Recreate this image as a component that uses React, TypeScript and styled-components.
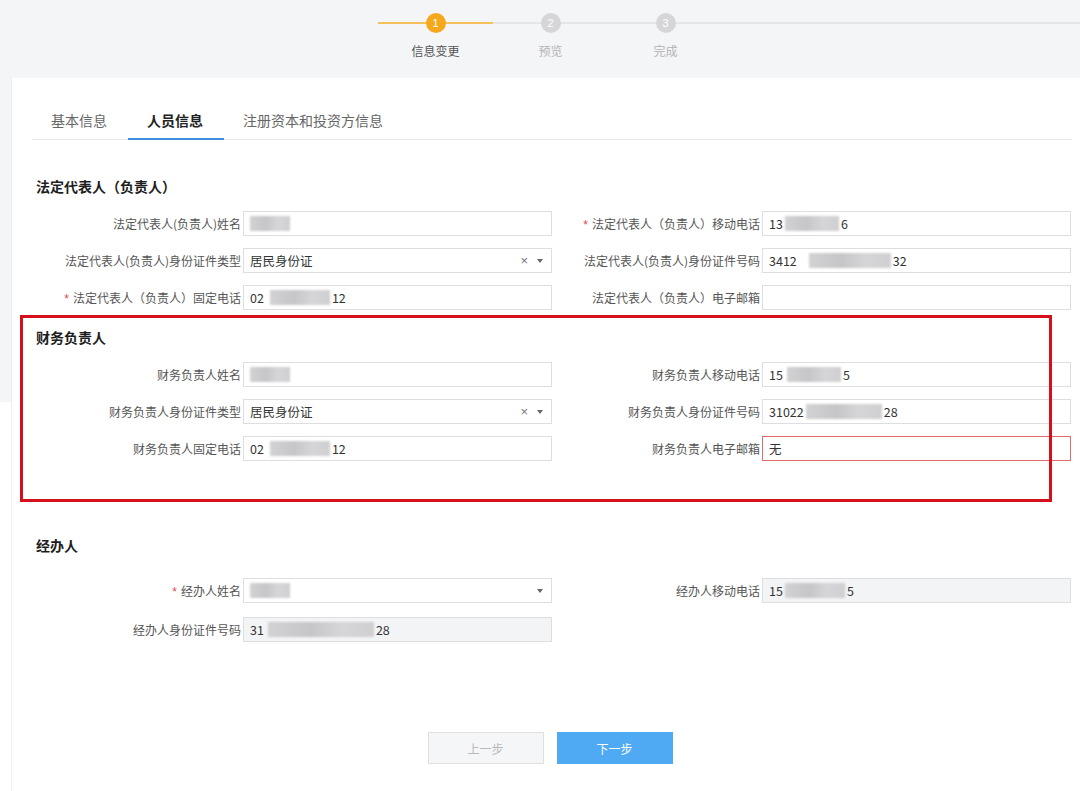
import React from "react";
import styled, { createGlobalStyle } from "styled-components";

const GlobalStyle = createGlobalStyle`
  html, body {
    margin: 0;
    padding: 0;
  }
  body {
    background: linear-gradient(#f4f5f7 0, #f4f5f7 402px, #ffffff 402px);
    font-family: "Noto Sans CJK SC", "Microsoft YaHei", sans-serif;
    color: #333;
    width: 1080px;
    height: 791px;
    overflow: hidden;
  }
`;

const Page = styled.div`
  width: 1080px;
  height: 791px;
  display: flex;
  flex-direction: column;
`;

/* ---------- stepper ---------- */

const StepperBar = styled.div`
  height: 78px;
  display: flex;
  padding-left: 378px;
  flex-shrink: 0;
`;

const Step = styled.div<{ $active?: boolean }>`
  width: 115px;
  display: flex;
  flex-direction: column;
  align-items: center;
  position: relative;
  padding-top: 13px;

  &::before {
    content: "";
    position: absolute;
    top: 22px;
    left: 0;
    right: 0;
    height: 2px;
    background: ${(p) => (p.$active ? "#f6c15a" : "#e6e6e8")};
  }
`;

const Circle = styled.div<{ $active?: boolean }>`
  position: relative;
  width: 20px;
  height: 20px;
  border-radius: 50%;
  background: ${(p) => (p.$active ? "#f5a81c" : "#d6d6d8")};
  color: #fff;
  font-size: 11px;
  line-height: 20px;
  text-align: center;
  font-family: "Liberation Sans", sans-serif;
`;

const StepLabel = styled.div<{ $active?: boolean }>`
  margin-top: 10px;
  font-size: 12px;
  line-height: 16px;
  color: ${(p) => (p.$active ? "#555" : "#b3b3b3")};
`;

const TrailLine = styled.div`
  flex: 1;
  position: relative;
  &::before {
    content: "";
    position: absolute;
    top: 22px;
    left: 0;
    right: 0;
    height: 2px;
    background: #e6e6e8;
  }
`;

/* ---------- card ---------- */

const Card = styled.div`
  flex: 1;
  margin-left: 11px;
  background: #fff;
  border-left: 1px solid #eceef0;
  padding: 21px 8px 0 20px;
  display: flex;
  flex-direction: column;
`;

const Tabs = styled.div`
  display: flex;
  height: 40px;
  border-bottom: 1px solid #e6e8ea;
`;

const Tab = styled.div<{ $active?: boolean }>`
  width: 96px;
  height: 41px;
  padding: 4px 19px 0;
  box-sizing: border-box;
  font-size: 14px;
  line-height: 34px;
  white-space: nowrap;
  color: ${(p) => (p.$active ? "#222" : "#666")};
  font-weight: ${(p) => (p.$active ? 700 : 400)};
  border-bottom: 2px solid ${(p) => (p.$active ? "#3d8ee0" : "transparent")};
`;

const Section = styled.section<{ $top: number; $highlight?: boolean }>`
  position: relative;
  margin-top: ${(p) => p.$top}px;

  ${(p) =>
    p.$highlight &&
    `
    &::after {
      content: "";
      position: absolute;
      top: -12px;
      left: -12px;
      right: 20px;
      bottom: -41px;
      border: 3px solid #d3101c;
      pointer-events: none;
    }
  `}
`;

const SectionTitle = styled.h3<{ $gap: number }>`
  margin: 0 0 ${(p) => p.$gap}px;
  padding-left: 4px;
  font-size: 14px;
  line-height: 20px;
  font-weight: 700;
  color: #1e1e1e;
`;

const FormGrid = styled.div<{ $rowGap: number }>`
  display: grid;
  grid-template-columns: 520px 519px;
  row-gap: ${(p) => p.$rowGap}px;
`;

const Field = styled.div`
  display: flex;
  align-items: center;
  height: 25px;
`;

const Label = styled.label`
  flex: 1;
  text-align: right;
  padding-right: 2px;
  font-size: 12px;
  color: #555;
  white-space: nowrap;
`;

const Star = styled.span`
  color: #e3464d;
  margin-right: 4px;
  font-family: "Liberation Sans", sans-serif;
`;

const Box = styled.div<{ $disabled?: boolean; $error?: boolean }>`
  width: 309px;
  height: 25px;
  box-sizing: border-box;
  border: 1px solid ${(p) => (p.$error ? "#e26a6a" : "#dcdee0")};
  background: ${(p) => (p.$disabled ? "#f3f4f6" : "#fff")};
  display: flex;
  align-items: center;
  padding: 0 8px 0 6px;
  font-size: 13px;
  color: #333;
  white-space: nowrap;
`;

const Value = styled.span`
  display: flex;
  align-items: center;
  flex: 1;
  font-family: "Noto Sans CJK SC", sans-serif;
  font-size: 12.5px;
`;

const Redacted = styled.span<{ $w: number; $ml?: number }>`
  display: inline-block;
  width: ${(p) => p.$w}px;
  height: 15px;
  margin-left: ${(p) => p.$ml ?? 2}px;
  margin-right: 2px;
  background: linear-gradient(90deg, #d2d2d4, #c6c6c8 40%, #d6d6d8 70%, #cfcfd1);
  filter: blur(1.2px);
`;

const Clear = styled.span`
  font-family: "Liberation Sans", sans-serif;
  font-size: 13px;
  color: #777;
  margin-right: 9px;
`;

const Caret = styled.span`
  width: 0;
  height: 0;
  border-left: 3px solid transparent;
  border-right: 3px solid transparent;
  border-top: 4px solid #666;
`;

const Actions = styled.div`
  margin-top: 90px;
  display: flex;
  justify-content: center;
  gap: 13px;
  padding-right: 4px;
`;

const Button = styled.button<{ $primary?: boolean }>`
  width: 116px;
  height: 32px;
  border: 1px solid ${(p) => (p.$primary ? "#4fa9f3" : "#dedfe1")};
  background: ${(p) => (p.$primary ? "#4fa9f3" : "#f5f6f8")};
  color: ${(p) => (p.$primary ? "#fff" : "#b9b9bb")};
  font-family: "Noto Sans CJK SC", sans-serif;
  font-size: 12px;
  padding: 0;
  cursor: pointer;
`;

type Part = string | { blur: number; ml?: number };

const Text = ({ parts }: { parts: Part[] }) => (
  <Value>
    {parts.map((p, i) =>
      typeof p === "string" ? (
        <span key={i}>{p}</span>
      ) : (
        <Redacted key={i} $w={p.blur} $ml={p.ml} />
      )
    )}
  </Value>
);

interface FieldProps {
  label: string;
  required?: boolean;
  parts?: Part[];
  select?: boolean;
  clearable?: boolean;
  disabled?: boolean;
  error?: boolean;
}

const FormField = ({ label, required, parts = [], select, clearable, disabled, error }: FieldProps) => (
  <Field>
    <Label>
      {required && <Star>*</Star>}
      {label}
    </Label>
    <Box $disabled={disabled} $error={error}>
      <Text parts={parts} />
      {clearable && <Clear>×</Clear>}
      {select && <Caret />}
    </Box>
  </Field>
);

const ID = "居民身份证";

export default function App() {
  return (
    <Page>
      <GlobalStyle />
      <StepperBar>
        <Step $active>
          <Circle $active>1</Circle>
          <StepLabel $active>信息变更</StepLabel>
        </Step>
        <Step>
          <Circle>2</Circle>
          <StepLabel>预览</StepLabel>
        </Step>
        <Step>
          <Circle>3</Circle>
          <StepLabel>完成</StepLabel>
        </Step>
        <TrailLine />
      </StepperBar>

      <Card>
        <Tabs>
          <Tab>基本信息</Tab>
          <Tab $active>人员信息</Tab>
          <Tab>注册资本和投资方信息</Tab>
        </Tabs>

        <Section $top={36}>
          <SectionTitle $gap={15}>法定代表人（负责人）</SectionTitle>
          <FormGrid $rowGap={12}>
            <FormField label="法定代表人(负责人)姓名" parts={[{ blur: 40, ml: 0 }]} />
            <FormField label="法定代表人（负责人）移动电话" required parts={["13", { blur: 54 }, "6"]} />
            <FormField label="法定代表人(负责人)身份证件类型" parts={[ID]} select clearable />
            <FormField label="法定代表人(负责人)身份证件号码" parts={["3412", { blur: 82, ml: 12 }, "32"]} />
            <FormField label="法定代表人（负责人）固定电话" required parts={["02", { blur: 60, ml: 6 }, "12"]} />
            <FormField label="法定代表人（负责人）电子邮箱" />
          </FormGrid>
        </Section>

        <Section $top={17} $highlight>
          <SectionTitle $gap={15}>财务负责人</SectionTitle>
          <FormGrid $rowGap={12}>
            <FormField label="财务负责人姓名" parts={[{ blur: 40, ml: 0 }]} />
            <FormField label="财务负责人移动电话" parts={["15", { blur: 54, ml: 4 }, "5"]} />
            <FormField label="财务负责人身份证件类型" parts={[ID]} select clearable />
            <FormField label="财务负责人身份证件号码" parts={["31022", { blur: 76, ml: 2 }, "28"]} />
            <FormField label="财务负责人固定电话" parts={["02", { blur: 60, ml: 6 }, "12"]} />
            <FormField label="财务负责人电子邮箱" parts={["无"]} error />
          </FormGrid>
        </Section>

        <Section $top={74}>
          <SectionTitle $gap={23}>经办人</SectionTitle>
          <FormGrid $rowGap={14}>
            <FormField label="经办人姓名" required parts={[{ blur: 40, ml: 0 }]} select />
            <FormField label="经办人移动电话" parts={["15", { blur: 60, ml: 2 }, "5"]} disabled />
            <FormField label="经办人身份证件号码" parts={["31", { blur: 106, ml: 4 }, "28"]} disabled />
          </FormGrid>
        </Section>

        <Actions>
          <Button>上一步</Button>
          <Button $primary>下一步</Button>
        </Actions>
      </Card>
    </Page>
  );
}
